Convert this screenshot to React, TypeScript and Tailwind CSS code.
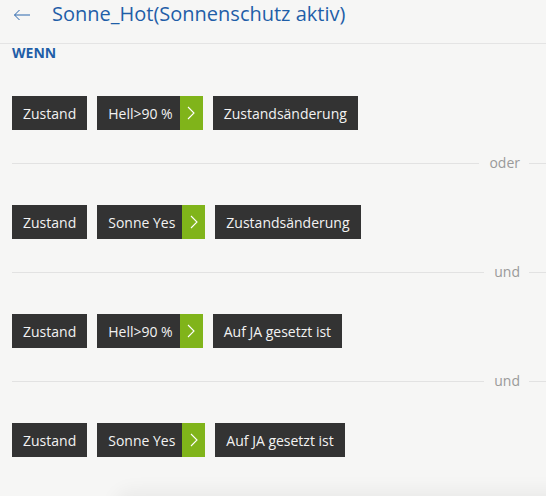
import React from "react";

type Row = { value: string; action: string; sep?: string };

const rows: Row[] = [
  { value: "Hell>90 %", action: "Zustandsänderung", sep: "oder" },
  { value: "Sonne Yes", action: "Zustandsänderung", sep: "und" },
  { value: "Hell>90 %", action: "Auf JA gesetzt ist", sep: "und" },
  { value: "Sonne Yes", action: "Auf JA gesetzt ist" },
];

function Chevron() {
  return (
    <svg width="8" height="14" viewBox="0 0 8 14" fill="none">
      <path d="M1 1l6 6-6 6" stroke="#fff" strokeWidth="1.1" />
    </svg>
  );
}

function ConditionRow({ row }: { row: Row }) {
  return (
    <div className="flex gap-[10px] text-[14px] text-[#f2f2f2]">
      <div className="h-[34px] px-[11px] flex items-center bg-[#333333]">Zustand</div>
      <div className="h-[34px] flex bg-[#333333]">
        <span className="pl-[11px] pr-[7px] flex items-center">{row.value}</span>
        <span className="w-[23px] flex items-center justify-center bg-[#80b41a]">
          <Chevron />
        </span>
      </div>
      <div className="h-[34px] px-[11px] flex items-center bg-[#333333]">{row.action}</div>
    </div>
  );
}

export default function App() {
  return (
    <div
      className="relative w-[546px] h-[496px] overflow-hidden bg-[#f6f6f5]"
      style={{ fontFamily: '"Open Sans", sans-serif' }}
    >
      {/* HEADER */}
      <div className="h-[44px] flex items-start pt-[2px] border-b border-[#e4e4e4] bg-[#f6f6f5]">
        <span className="w-[52px] pl-[13px] pt-[7px]">
          <svg width="18" height="12" viewBox="0 0 18 12" fill="none">
            <path d="M17 6H1.5M6.5 1L1.5 6l5 5" stroke="#2a66ad" strokeWidth="1" />
          </svg>
        </span>
        <h1 className="text-[20px] text-[#1f5ea8] leading-[24px]">Sonne_Hot(Sonnenschutz aktiv)</h1>
      </div>

      {/* WENN */}
      <div className="pl-[12px] pt-[1px] text-[14px] font-bold text-[#1f5ea8] leading-[16px]">WENN</div>

      <div className="pl-[12px] pt-[35px] flex flex-col">
        {rows.map((row, i) => (
          <div key={i}>
            <ConditionRow row={row} />
            {row.sep && (
              <div className="mt-[24px] mb-[33px] h-[18px] flex items-center">
                <div className="flex-1 h-px bg-[#e2e2e2]" />
                <span className="pl-[10px] pr-[9px] text-[14px] text-[#9a9a9a] leading-[18px] -mt-[1px]">{row.sep}</span>
                <div className="w-[17px] h-px bg-[#e2e2e2]" />
              </div>
            )}
          </div>
        ))}
      </div>

      {/* bottom shadow */}
      <div className="absolute left-[120px] right-[-40px] bottom-[-24px] h-[24px] rounded-full shadow-[0_0_18px_6px_rgba(0,0,0,0.05)]" />
    </div>
  );
}
